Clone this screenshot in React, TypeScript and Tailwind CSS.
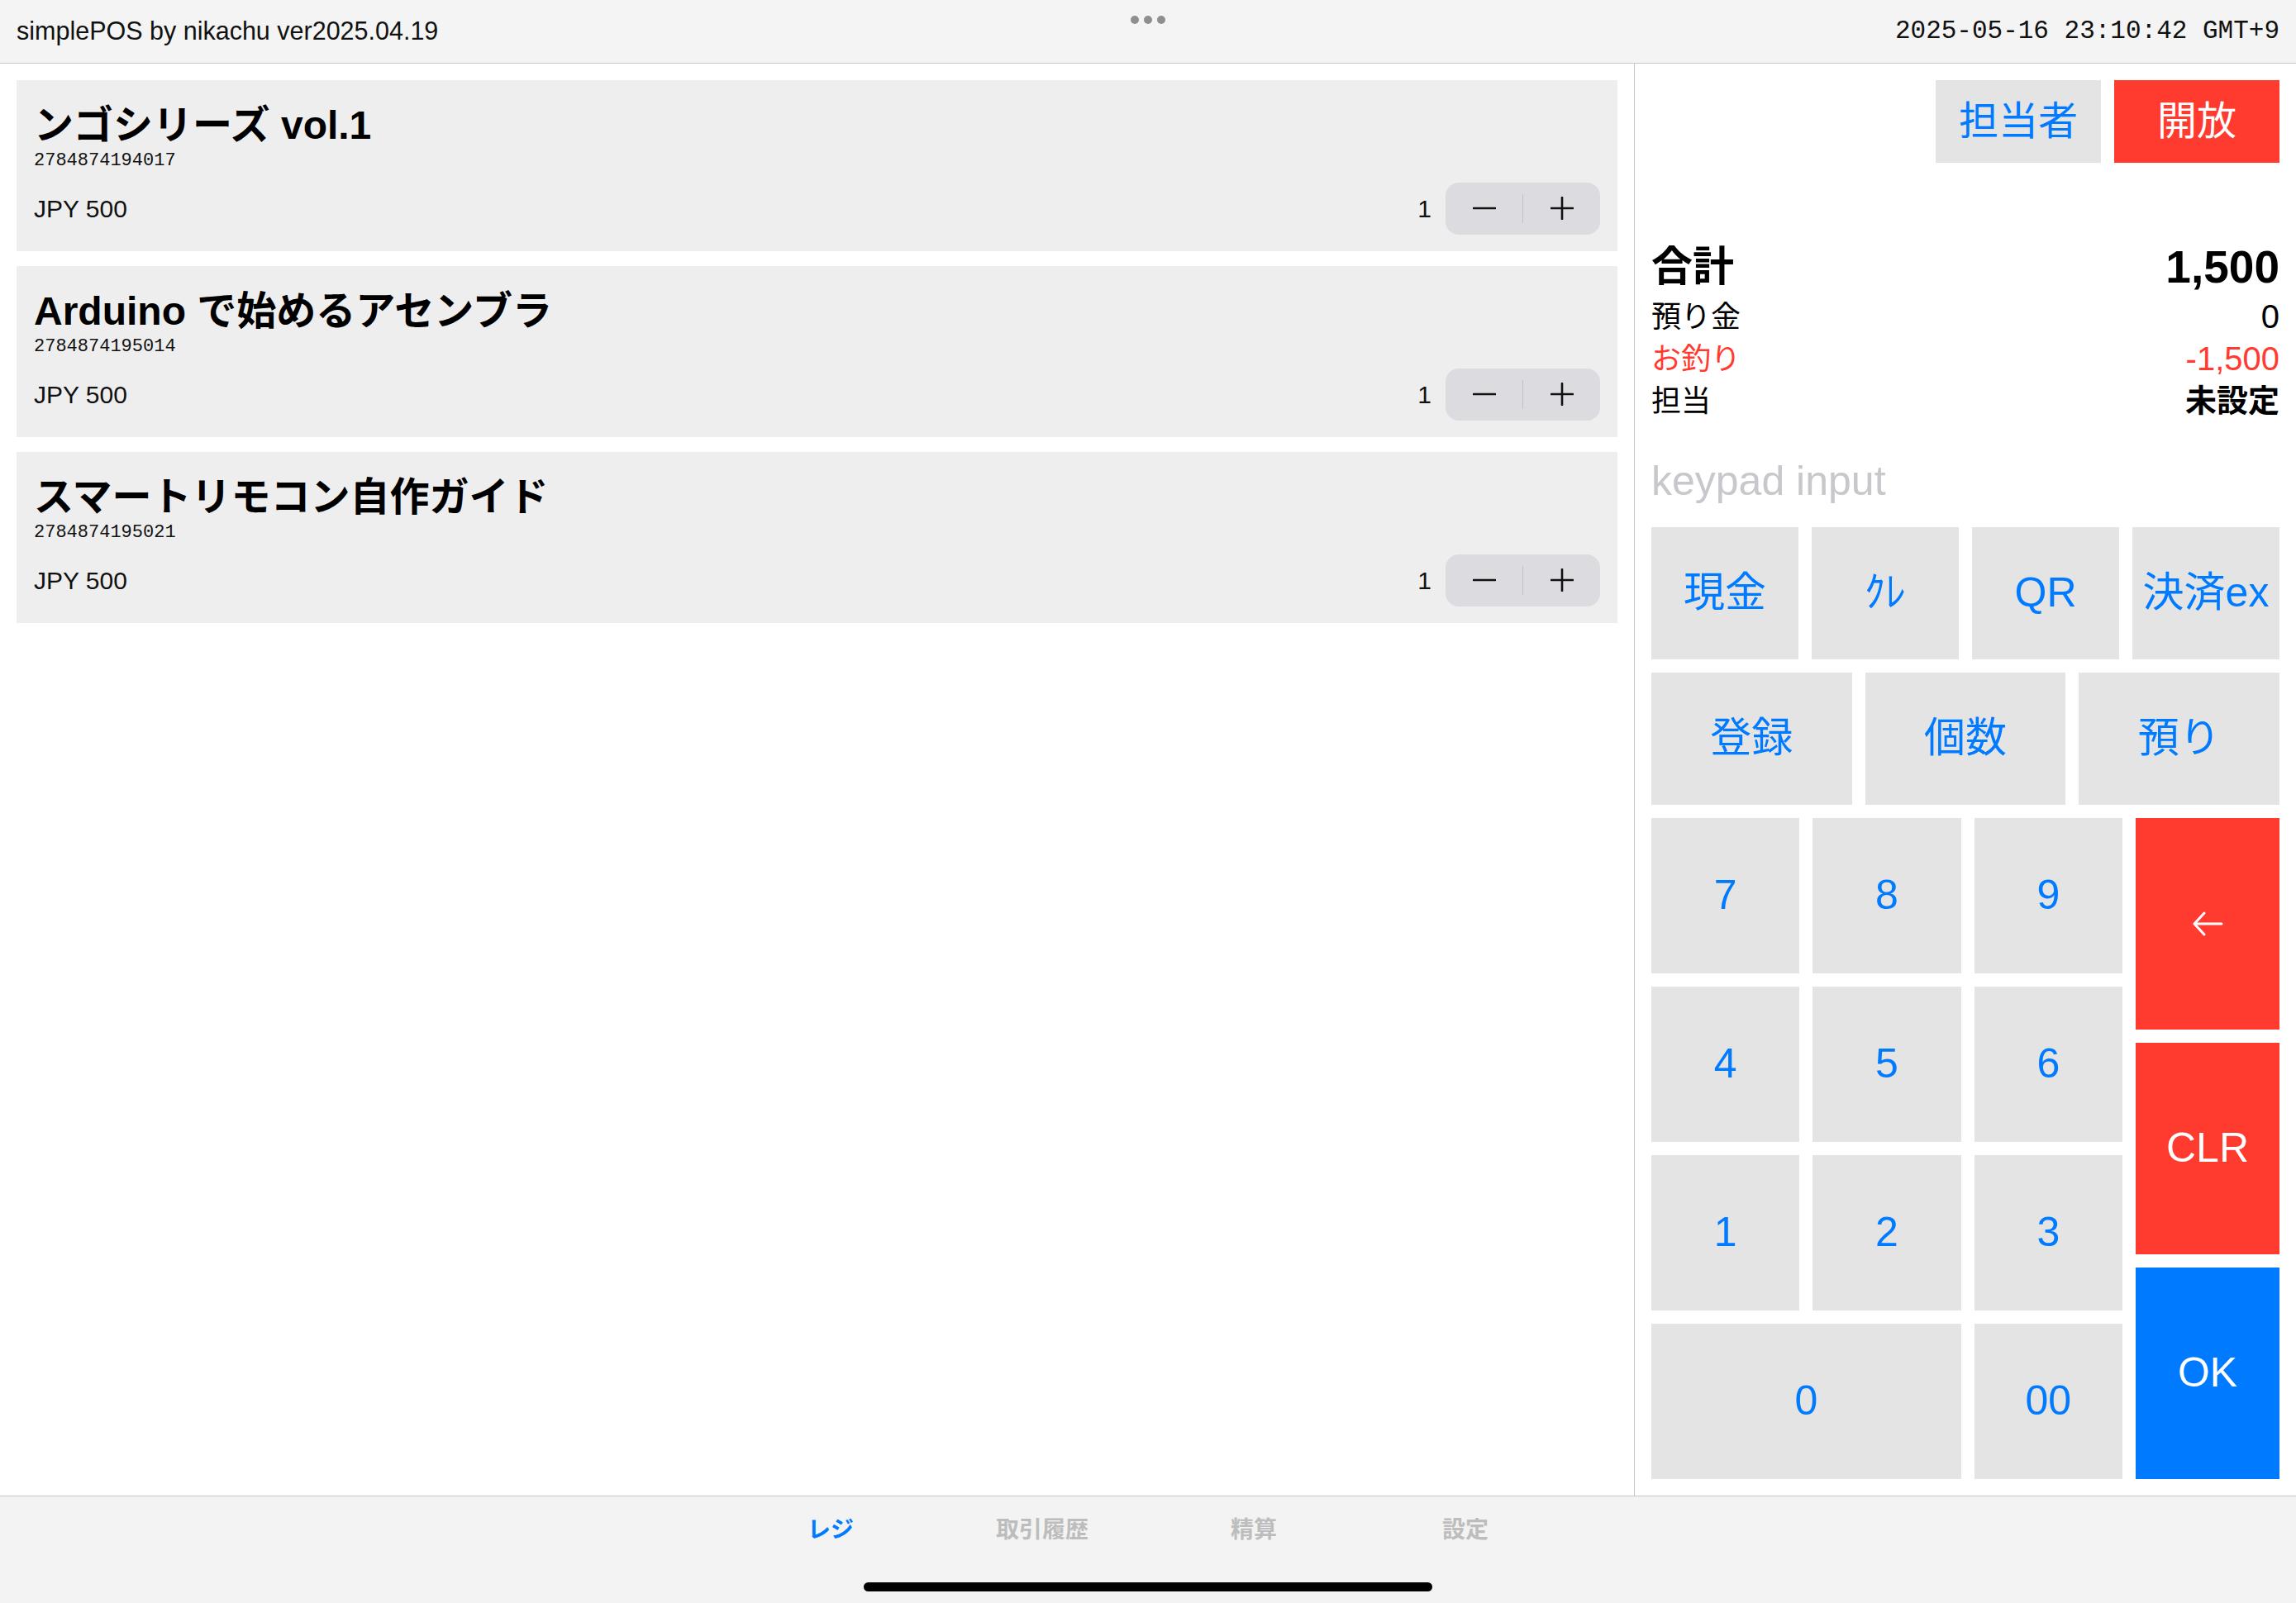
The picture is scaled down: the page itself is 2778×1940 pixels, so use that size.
import React from "react";

const items = [
  { name: "ンゴシリーズ vol.1", code: "2784874194017", price: "JPY 500", qty: 1 },
  { name: "Arduino で始めるアセンブラ", code: "2784874195014", price: "JPY 500", qty: 1 },
  { name: "スマートリモコン自作ガイド", code: "2784874195021", price: "JPY 500", qty: 1 },
];

const Stepper = () => (
  <div className="flex h-[63px] w-[187px] items-center rounded-[16px] bg-[#dcdce0]">
    <div className="flex flex-1 items-center justify-center">
      <svg width="28" height="4" viewBox="0 0 28 4">
        <line x1="1" y1="2" x2="27" y2="2" stroke="#111" strokeWidth="2.6" strokeLinecap="round" />
      </svg>
    </div>
    <div className="h-[35px] w-px bg-[#c2c2c6]" />
    <div className="flex flex-1 items-center justify-center">
      <svg width="28" height="28" viewBox="0 0 28 28">
        <line x1="1" y1="14" x2="27" y2="14" stroke="#111" strokeWidth="2.6" strokeLinecap="round" />
        <line x1="14" y1="1" x2="14" y2="27" stroke="#111" strokeWidth="2.6" strokeLinecap="round" />
      </svg>
    </div>
  </div>
);

const ItemCard = ({ item }: { item: (typeof items)[number] }) => (
  <div className="bg-[#eeeeee] px-[21px] pb-[20px] pt-[25px]">
    <div className="text-[48px] font-bold leading-[60px] text-black">{item.name}</div>
    <div className="font-['Liberation_Mono',monospace] text-[22px] leading-[26px] text-[#111]">{item.code}</div>
    <div className="mt-[13px] flex h-[63px] items-center justify-between">
      <span className="text-[30px] text-[#111]">{item.price}</span>
      <div className="flex items-center gap-[17px]">
        <span className="text-[30px] text-[#111]">{item.qty}</span>
        <Stepper />
      </div>
    </div>
  </div>
);

const Key = ({ label, className = "" }: { label: React.ReactNode; className?: string }) => (
  <button className={`flex items-center justify-center bg-[#e4e4e4] text-[50px] text-[#007aff] ${className}`}>
    {label}
  </button>
);

const App = () => {
  return (
    <div className="flex h-[1940px] w-[2778px] flex-col overflow-hidden bg-white font-['Liberation_Sans','Noto_Sans_CJK_JP',sans-serif] text-black">
      {/* top bar */}
      <header className="relative flex h-[77px] items-center justify-between border-b border-[#c6c6c6] bg-[#f4f4f4] px-[20px]">
        <span className="text-[30.5px] text-[#111]">simplePOS by nikachu ver2025.04.19</span>
        <div className="absolute left-1/2 top-[19px] flex -translate-x-1/2 gap-[6px]">
          <span className="h-[10px] w-[10px] rounded-full bg-[#8e8e8e]" />
          <span className="h-[10px] w-[10px] rounded-full bg-[#8e8e8e]" />
          <span className="h-[10px] w-[10px] rounded-full bg-[#8e8e8e]" />
        </div>
        <span className="font-['Liberation_Mono',monospace] text-[31px] text-[#111]">2025-05-16 23:10:42 GMT+9</span>
      </header>

      <div className="flex flex-1">
        {/* cart */}
        <div className="flex w-[1978px] flex-col gap-[18px] border-r border-[#c6c6c6] px-[20px] pt-[20px]">
          {items.map((item) => (
            <ItemCard key={item.code} item={item} />
          ))}
        </div>

        {/* register panel */}
        <div className="flex flex-1 flex-col px-[20px] pb-[20px] pt-[20px]">
          <div className="flex h-[100px] justify-end gap-[16px]">
            <button className="w-[200px] bg-[#e4e4e4] text-[48px] text-[#007aff]">担当者</button>
            <button className="w-[200px] bg-[#ff3b30] text-[48px] text-white">開放</button>
          </div>

          <div className="mt-[96px] flex items-center justify-between font-bold leading-[60px]">
            <span className="text-[50px]">合計</span>
            <span className="text-[55px]">1,500</span>
          </div>
          <div className="mt-[5px] flex flex-col text-[36px] leading-[51px]">
            <div className="flex items-center justify-between">
              <span>預り金</span>
              <span className="text-[40px]">0</span>
            </div>
            <div className="flex items-center justify-between text-[#ff3b30]">
              <span>お釣り</span>
              <span className="text-[40px]">-1,500</span>
            </div>
            <div className="flex items-center justify-between">
              <span>担当</span>
              <span className="text-[38px] font-bold">未設定</span>
            </div>
          </div>

          <div className="mt-[41px] text-[50px] leading-[60px] text-[#c7c7cc]">keypad input</div>

          <div className="mt-[26px] grid h-[160px] grid-cols-4 gap-[16px]">
            <Key label="現金" />
            <Key label="ｸﾚ" />
            <Key label="QR" />
            <Key label="決済ex" />
          </div>
          <div className="mt-[16px] grid h-[160px] grid-cols-3 gap-[16px]">
            <Key label="登録" />
            <Key label="個数" />
            <Key label="預り" />
          </div>

          <div className="mt-[16px] flex h-[800px] gap-[16px]">
            <div className="grid flex-1 grid-cols-3 grid-rows-4 gap-[16px]">
              {["7", "8", "9", "4", "5", "6", "1", "2", "3"].map((d) => (
                <Key key={d} label={d} />
              ))}
              <Key label="0" className="col-span-2" />
              <Key label="00" />
            </div>
            <div className="flex w-[174px] flex-col gap-[16px]">
              <button className="flex flex-1 items-center justify-center bg-[#ff3b30]">
                <svg width="38" height="32" viewBox="0 0 38 32" fill="none">
                  <path d="M36 16H3M15 3L3 16l12 13" stroke="white" strokeWidth="3" strokeLinecap="round" strokeLinejoin="round" />
                </svg>
              </button>
              <button className="flex flex-1 items-center justify-center bg-[#ff3b30] text-[50px] text-white">CLR</button>
              <button className="flex flex-1 items-center justify-center bg-[#007aff] text-[50px] text-white">OK</button>
            </div>
          </div>
        </div>
      </div>

      {/* tab bar */}
      <footer className="flex h-[131px] flex-col items-center border-t border-[#c6c6c6] bg-[#f3f3f3] pt-[24px]">
        <nav className="flex text-[28px] font-bold leading-[34px]">
          <span className="w-[256px] text-center text-[#007aff]">レジ</span>
          <span className="w-[256px] text-center text-[#bdbdbd]">取引履歴</span>
          <span className="w-[256px] text-center text-[#bdbdbd]">精算</span>
          <span className="w-[256px] text-center text-[#bdbdbd]">設定</span>
        </nav>
        <div className="mt-[46px] h-[11px] w-[688px] rounded-full bg-black" />
      </footer>
    </div>
  );
};

export default App;
